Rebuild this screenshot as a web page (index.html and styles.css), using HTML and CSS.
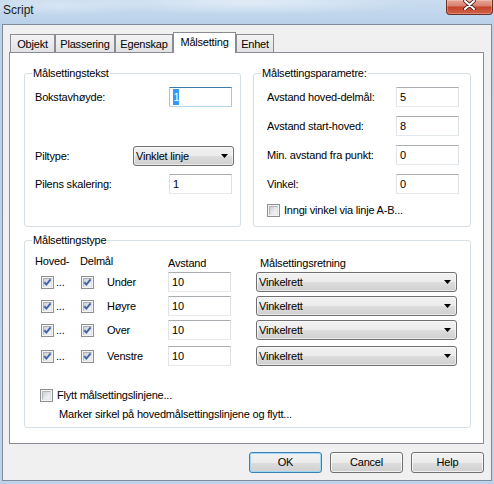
FILE: index.html
```html
<!DOCTYPE html>
<html lang="no">
<head>
<meta charset="utf-8">
<title>Script</title>
<link rel="stylesheet" href="styles.css">
</head>
<body>
<div class="window">
  <div class="titlebar">
    <div class="title">Script</div>
    <div class="close">
      <svg width="13" height="10" viewBox="0 0 13 10"><path d="M2 1L11 9M11 1L2 9" stroke="#3a1a14" stroke-width="3.6" stroke-linecap="round"/><path d="M2 1L11 9M11 1L2 9" stroke="#fff" stroke-width="2" stroke-linecap="round"/></svg>
    </div>
  </div>
  <div class="client">
    <div class="tabs">
      <div class="tab w-obj">Objekt</div>
      <div class="tab w-pla">Plassering</div>
      <div class="tab w-ege">Egenskap</div>
      <div class="tab sel w-mal">Målsetting</div>
      <div class="tab w-enh">Enhet</div>
    </div>
    <div class="panel">
      <div class="top-row">
        <div class="group g1">
          <div class="gtitle">Målsettingstekst</div>
          <div class="gbody">
            <div class="field"><span>Bokstavhøyde:</span><div class="tb focus"><span class="selx">1</span></div></div>
            <div class="field f-pil"><span>Piltype:</span>
              <div class="combo c-pil"><span>Vinklet linje</span><svg class="arrow" width="7" height="4" viewBox="0 0 7 4"><path d="M0 0H7L3.5 4Z" fill="#000"/></svg></div>
            </div>
            <div class="field f-sk"><span>Pilens skalering:</span><div class="tb">1</div></div>
          </div>
        </div>
        <div class="group g2">
          <div class="gtitle">Målsettingsparametre:</div>
          <div class="gbody">
            <div class="field"><span>Avstand hoved-delmål:</span><div class="tb">5</div></div>
            <div class="field"><span>Avstand start-hoved:</span><div class="tb">8</div></div>
            <div class="field"><span>Min. avstand fra punkt:</span><div class="tb">0</div></div>
            <div class="field"><span>Vinkel:</span><div class="tb">0</div></div>
            <div class="chkrow"><span class="cb"><span class="cb-in"></span></span><span>Inngi vinkel via linje A-B...</span></div>
          </div>
        </div>
      </div>
      <div class="group g3">
        <div class="gtitle">Målsettingstype</div>
        <div class="gbody">
          <div class="hrow">
            <span class="h1">Hoved-</span><span class="h2">Delmål</span><span class="h3">Avstand</span><span class="h4">Målsettingsretning</span>
          </div>
          <div class="trow">
            <div class="c1"><span class="cb"><span class="cb-in"><svg class="tick" width="9" height="9" viewBox="0 0 9 9"><path d="M1.3 4.2L3.4 6.6L7.6 1.4" fill="none" stroke="#4062a5" stroke-width="1.9"/></svg></span></span><span class="dots">...</span></div>
            <div class="c2"><span class="cb"><span class="cb-in"><svg class="tick" width="9" height="9" viewBox="0 0 9 9"><path d="M1.3 4.2L3.4 6.6L7.6 1.4" fill="none" stroke="#4062a5" stroke-width="1.9"/></svg></span></span></div>
            <div class="c3">Under</div>
            <div class="tb">10</div>
            <div class="combo c-dir"><span>Vinkelrett</span><svg class="arrow" width="7" height="4" viewBox="0 0 7 4"><path d="M0 0H7L3.5 4Z" fill="#000"/></svg></div>
          </div>
          <div class="trow">
            <div class="c1"><span class="cb"><span class="cb-in"><svg class="tick" width="9" height="9" viewBox="0 0 9 9"><path d="M1.3 4.2L3.4 6.6L7.6 1.4" fill="none" stroke="#4062a5" stroke-width="1.9"/></svg></span></span><span class="dots">...</span></div>
            <div class="c2"><span class="cb"><span class="cb-in"><svg class="tick" width="9" height="9" viewBox="0 0 9 9"><path d="M1.3 4.2L3.4 6.6L7.6 1.4" fill="none" stroke="#4062a5" stroke-width="1.9"/></svg></span></span></div>
            <div class="c3">Høyre</div>
            <div class="tb">10</div>
            <div class="combo c-dir"><span>Vinkelrett</span><svg class="arrow" width="7" height="4" viewBox="0 0 7 4"><path d="M0 0H7L3.5 4Z" fill="#000"/></svg></div>
          </div>
          <div class="trow">
            <div class="c1"><span class="cb"><span class="cb-in"><svg class="tick" width="9" height="9" viewBox="0 0 9 9"><path d="M1.3 4.2L3.4 6.6L7.6 1.4" fill="none" stroke="#4062a5" stroke-width="1.9"/></svg></span></span><span class="dots">...</span></div>
            <div class="c2"><span class="cb"><span class="cb-in"><svg class="tick" width="9" height="9" viewBox="0 0 9 9"><path d="M1.3 4.2L3.4 6.6L7.6 1.4" fill="none" stroke="#4062a5" stroke-width="1.9"/></svg></span></span></div>
            <div class="c3">Over</div>
            <div class="tb">10</div>
            <div class="combo c-dir"><span>Vinkelrett</span><svg class="arrow" width="7" height="4" viewBox="0 0 7 4"><path d="M0 0H7L3.5 4Z" fill="#000"/></svg></div>
          </div>
          <div class="trow last">
            <div class="c1"><span class="cb"><span class="cb-in"><svg class="tick" width="9" height="9" viewBox="0 0 9 9"><path d="M1.3 4.2L3.4 6.6L7.6 1.4" fill="none" stroke="#4062a5" stroke-width="1.9"/></svg></span></span><span class="dots">...</span></div>
            <div class="c2"><span class="cb"><span class="cb-in"><svg class="tick" width="9" height="9" viewBox="0 0 9 9"><path d="M1.3 4.2L3.4 6.6L7.6 1.4" fill="none" stroke="#4062a5" stroke-width="1.9"/></svg></span></span></div>
            <div class="c3">Venstre</div>
            <div class="tb">10</div>
            <div class="combo c-dir"><span>Vinkelrett</span><svg class="arrow" width="7" height="4" viewBox="0 0 7 4"><path d="M0 0H7L3.5 4Z" fill="#000"/></svg></div>
          </div>
          <div class="chkrow flytt"><span class="cb"><span class="cb-in"></span></span><span>Flytt målsettingslinjene...</span></div>
          <div class="note">Marker sirkel på hovedmålsettingslinjene og flytt...</div>
        </div>
      </div>
    </div>
    <div class="buttons">
      <div class="btn default">OK</div>
      <div class="btn">Cancel</div>
      <div class="btn">Help</div>
    </div>
  </div>
</div>
</body>
</html>
```
FILE: styles.css
```css
* { box-sizing: border-box; }
html, body { margin: 0; padding: 0; }
body {
  width: 494px;
  height: 484px;
  overflow: hidden;
  font-family: "Liberation Sans", Arial, sans-serif;
  font-size: 11px;
  letter-spacing: -0.2px;
  line-height: 13px;
  color: #000;
}
.window {
  width: 494px;
  height: 484px;
  display: flex;
  flex-direction: column;
  background:
    radial-gradient(ellipse 170px 12px at 250px 3px, rgba(255,255,255,0.45), rgba(255,255,255,0)),
    radial-gradient(ellipse 90px 10px at 60px 6px, rgba(255,255,255,0.3), rgba(255,255,255,0)),
    linear-gradient(180deg, #cadcef 0px, #b9d1ea 24px, #bcd3eb 100%);
}
.titlebar {
  height: 24px;
  flex: none;
  display: flex;
  justify-content: space-between;
  align-items: flex-start;
}
.title {
  margin-left: 3px;
  font-size: 12px;
  letter-spacing: 0;
  line-height: 20px;
  color: #1b1b1b;
}
.close {
  width: 47px;
  height: 15px;
  margin-right: 1px;
  border: 1px solid #6b3026;
  border-top: none;
  border-radius: 0 0 4px 4px;
  background: linear-gradient(180deg, #e6a596 0%, #d98371 40%, #c6452c 52%, #cf6146 100%);
  box-shadow: inset 0 0 0 1px rgba(255,255,255,0.25);
  display: flex;
  justify-content: center;
  align-items: flex-start;
  padding-top: 0;
}
.client {
  flex: 1;
  margin: 0 2px 3px 2px;
  border: 1px solid #7e8c9a;
  background: #f0f0f0;
  padding: 7px 7px 0 6px;
  display: flex;
  flex-direction: column;
}
.tabs {
  height: 20px;
  display: flex;
  align-items: flex-end;
  padding-left: 1px;
}
.tab {
  height: 18px;
  border: 1px solid #898c95;
  border-bottom: none;
  background: linear-gradient(180deg, #f3f3f3 0%, #ebebeb 50%, #e2e2e2 100%);
  display: flex;
  align-items: center;
  justify-content: center;
  padding-top: 1px;
}
.tab.sel {
  height: 21px;
  margin-bottom: -1px;
  background: #fff;
  position: relative;
  z-index: 1;
  padding-top: 0;
  padding-bottom: 2px;
}
.w-obj { width: 45px; }
.w-pla { width: 60px; }
.w-ege { width: 58px; }
.w-mal { width: 63px; }
.w-enh { width: 38px; }
.panel {
  height: 392px;
  flex: none;
  border: 1px solid #898c95;
  background: #fff;
  padding: 20px 12px 0 14px;
}
.top-row {
  display: flex;
  gap: 12px;
  height: 154px;
}
.group {
  border: 1px solid #d5dfe5;
  border-radius: 3px;
}
.g1 { width: 217px; }
.g2 { width: 218px; }
.g3 { margin-top: 13px; height: 188px; }
.gtitle {
  margin: -7px 0 0 7px;
  padding: 0 1px;
  width: max-content;
  height: 13px;
  background: #fff;
}
.field {
  height: 20px;
  display: flex;
  align-items: center;
  justify-content: space-between;
}
.g1 .gbody { padding: 7px 8px 0 10px; }
.g1 .f-pil { margin-top: 39px; }
.g1 .f-sk { margin-top: 8px; }
.g2 .gbody {
  padding: 7px 11px 0 13px;
  display: flex;
  flex-direction: column;
  gap: 9px;
}
.g2 .chkrow { margin-top: 1px; }
.tb {
  width: 63px;
  height: 20px;
  border: 1px solid;
  border-color: #abadb3 #dbdfe6 #e3e9ef #e2e3ea;
  background: #fff;
  padding: 0 3px;
  display: flex;
  align-items: center;
}
.tb.focus {
  border-color: #3d7bad #a4c9e3 #b7d9ed #a4c9e3;
}
.selx {
  background: #3399ff;
  color: #fff;
  line-height: 16px;
  padding: 0 0 0 0.5px;
}
.combo {
  height: 20px;
  border: 1px solid #707070;
  border-radius: 3px;
  background: linear-gradient(180deg, #f2f2f2 0%, #ebebeb 50%, #dddddd 50%, #cfcfcf 100%);
  box-shadow: inset 0 0 0 1px rgba(255,255,255,0.55);
  display: flex;
  align-items: center;
  justify-content: space-between;
  padding: 0 5px 0 2px;
}
.c-pil { width: 101px; margin-right: -2px; }
.c-dir { width: 201px; margin-left: 25px; }
.arrow { display: block; }
.chkrow {
  height: 13px;
  display: flex;
  align-items: center;
  gap: 4px;
}
.cb {
  width: 13px;
  height: 13px;
  flex: none;
  border: 1px solid #8e8f8f;
  background: #f4f4f4;
  padding: 1px;
  display: block;
}
.cb-in {
  display: block;
  width: 9px;
  height: 9px;
  border: 1px solid;
  border-color: #aeb3b9 #dcdfe2 #e6e7e8 #b2b6bb;
  background: linear-gradient(135deg, #cbcfd5 0%, #e6e8ea 55%, #f7f7f7 100%);
}
.tick {
  display: block;
  margin: -1px 0 0 -1px;
  overflow: visible;
}
.g3 .gbody { padding: 8px 0 0 0; }
.hrow {
  height: 13px;
  display: flex;
  padding-left: 10px;
}
.h1 { width: 45px; }
.h2 { width: 88px; }
.h3 { width: 92px; padding-top: 2px; }
.h4 { padding-top: 2px; }
.trow {
  height: 20px;
  margin-top: 4px;
  display: flex;
  align-items: center;
  padding-left: 16px;
}
.trow.last { margin-top: 6px; }
.c1 { width: 40px; display: flex; align-items: center; }
.dots { margin-left: 2px; }
.c2 { width: 26px; display: flex; align-items: center; }
.c3 { width: 61px; }
.flytt { margin-top: 23px; padding-left: 15px; }
.note { margin-top: 6px; padding-left: 34px; }
.buttons {
  margin-top: 8px;
  display: flex;
  justify-content: flex-end;
  gap: 8px;
}
.btn {
  width: 73px;
  height: 21px;
  border: 1px solid #707070;
  border-radius: 3px;
  background: linear-gradient(180deg, #f2f2f2 0%, #ebebeb 50%, #dddddd 50%, #cfcfcf 100%);
  box-shadow: inset 0 0 0 1px rgba(255,255,255,0.7);
  display: flex;
  align-items: center;
  justify-content: center;
}
.btn.default {
  border-color: #3c7fb1;
  box-shadow: inset 0 0 0 1px #9fd8f6;
}
```
